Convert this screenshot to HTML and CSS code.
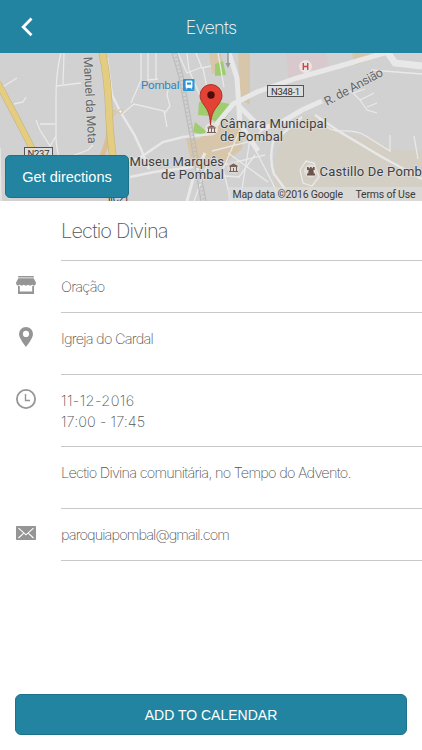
FILE: index.html
```html
<!DOCTYPE html>
<html lang="pt">
<head>
    <meta charset="UTF-8">
    <meta name="viewport" content="width=device-width, initial-scale=1.0">
    <title>Events</title>
    <link rel="stylesheet" href="styles.css">
</head>
<body>
    <div class="page">
        <header class="navbar">
            <a class="back" href="#" aria-label="Back">
                <svg width="13" height="20" viewBox="0 0 13 20"><path d="M11.500 1.600 3.200 10l8.300 8.300" fill="none" stroke="#fff" stroke-width="2.800"/></svg>
            </a>
            <h1>Events</h1>
        </header>

        <div class="map">
            <svg class="map-canvas" width="422" height="148" viewBox="0 0 422 148">
                <rect width="422" height="148" fill="#d1d1d1"/>

                <!-- areas -->
                <path d="M281 79 302 62l15 1 20 16 36 7 17 10 32 2v50H285q-12-9-12-22 0-25 8-35z" fill="#d3cfc5"/>
                <path d="M286 0h40l4 17-41 13z" fill="#d8c9cd"/>
                <path d="M209 0h12l3 18-12 3zM352 0h18v7l-15 5zM238 0h12v52l-10-6zM221 64l22 12-1 20-19 15-25 5-5-12 5-17zM186 85l18 1 3 17-16 5z" fill="#d7c6a9"/>
                <path d="M215 11l8-3 3 14-11 1zM214 48l16 3v8l-9 12-11-5zM199 49l9-2 1 16-11-1zM195 69l11 9-2 4-11-3z" fill="#a0cc70"/>

                <!-- small streets -->
                <g fill="none" stroke="#e9e9e9" stroke-width="1.300">
                    <path d="M61 0q-5 18-5 45v41q1 13 3 17M64 0l-1 31M56 33l25-3M1 35l16-10M14 51l9-2 3-5M36 67l4 10 10 16 6-10M40 71h15M93 92l-5 5-16 6M0 95l1 53M12 106l-2 40"/>
                    <path d="M141 0v27M148 0v27l10-1M156 0v26M141 27l-10 23M122 61l12-10 30 7 3 16M165 60l5-7-3-11 2-10"/>
                    <path d="M187 0 189 17l12 28M196 0l6 15 9-2M203 15l4 20M218 0l6 34M178 0l9 20 15-6"/>
                    <path d="M242 70 257 100l16 31 7 17M212 98l36-9 17-14M220 113l45-11M240 77l-17 39 8 32M250 86l-10 62M212 122l27 2 16-22M228 100l40 29M194 148l14-38"/>
                    <path d="M353 40l7 7 14-7M360 47l7 10 10 3M367 54l10-4M345 36l8 4 12-4"/>
                    <path d="M317 63q9 14 20 15 21-1 29 5l24 15v-16M300 117l6-9 8 2 5 14-7 9-9-3zM414 83l4 23M371 17l51 4"/>
                </g>
                <g fill="none" stroke="#e8e8e8" stroke-width="2.400">
                    <path d="M107 5 112 42l9 18 13 21 7 15 8 20M130 124l24-5 39-5M114 110l24-4 25-17 20-5 28-3"/>
                    <path d="M315 62 340 79l42 25 40 22M302 64l-29 25q-4 18 1 32l11 15"/>
                </g>

                <!-- main roads -->
                <g fill="none" stroke="#e8e8e8">
                    <path d="M229 0 237 25l3 46 18 27" stroke-width="5"/>
                    <path d="M211 78 233 51l24-12 40-14 43-12 51-15" stroke-width="5"/>
                    <path d="M239 53 261 75l16-3 25-15 20-9" stroke-width="5"/>
                    <path d="M388 0 395 10l27 3" stroke-width="7"/>
                    <path d="M205 100 193 126l-6 22" stroke-width="3"/>
                </g>

                <!-- railway -->
                <g fill="none" stroke="#bcbcbc">
                    <path d="M172 0 179 24l11 59 11 65M177 0l6 23 11 61 12 64" stroke-width="1.200"/>
                    <path d="M175 0 181 24l11 59 12 65" stroke-width="3" stroke-dasharray="1 3"/>
                </g>
                <path d="M228 0v13" stroke="#999" stroke-width="1.500"/>
                <path d="M225.500 10h5l-2.500 5z" fill="#999"/>

                <!-- highways -->
                <g fill="none">
                    <path d="M-2 30 16 64l18 35 10 17" stroke="#c4b382" stroke-width="6.600"/>
                    <path d="M-2 30 16 64l18 35 10 17" stroke="#e5cd80" stroke-width="5.400"/>
                    <path d="M109 75q0 12-7 28" stroke="#d9be96" stroke-width="5"/>
                    <path d="M102-2q6 27 7 62 1 25 6 60" stroke="#c4b382" stroke-width="7.600"/>
                    <path d="M102-2q6 27 7 62 1 25 6 60" stroke="#e5cd80" stroke-width="6.400"/>
                    <path d="M112 56l4 3-3 4" stroke="#dfc28f" stroke-width="1.500"/>
                </g>
                <circle cx="120.500" cy="58.500" r="2" fill="#eee" stroke="#d7b98d"/>

                <!-- road signs -->
                <g class="sign">
                    <rect x="24.500" y="94.500" width="28" height="11"/>
                    <text x="27.500" y="104" textLength="22">N237</text>
                    <text x="108" y="148.500" textLength="21">IIC21</text>
                    <rect x="267.500" y="32.500" width="36" height="11"/>
                    <text x="271" y="42" textLength="29">N348-1</text>
                </g>

                <!-- labels -->
                <g class="street">
                    <text transform="translate(83.500 4) rotate(87)" textLength="87">Manuel da Mota</text>
                    <text transform="translate(327 53) rotate(-28.500)" textLength="65">R. de Ansião</text>
                </g>
                <g class="label">
                    <text x="220" y="74.500" textLength="107">Câmara Municipal</text>
                    <text x="220" y="87.500" textLength="63">de Pombal</text>
                    <text x="129.500" y="112.500" textLength="94.500">Museu Marquês</text>
                    <text x="161" y="125.500" textLength="63">de Pombal</text>
                    <text x="319.500" y="123" textLength="113">Castillo De Pombal</text>
                </g>
                <text class="station" x="141" y="35.500" textLength="38.500">Pombal</text>

                <!-- station icon -->
                <rect x="183" y="26" width="11.500" height="12" rx="1" fill="#2795d6"/>
                <path d="M186 28h6v6.500h-6zM186 36.500l1.500-2M192 36.500l-1.500-2" fill="#fff" stroke="#fff" stroke-width=".8"/>
                <path d="M187 29.500h4v2.200h-4z" fill="#2795d6"/>

                <!-- hospital -->
                <circle cx="305.500" cy="13.500" r="6.500" fill="#e9e5e5"/>
                <path d="M303.300 10v7M307.700 10v7M303.300 13.500h4.400" stroke="#cf4646" stroke-width="1.400"/>

                <!-- museum and castle -->
                <circle cx="211.500" cy="76" r="6.500" fill="#e6e2dd"/>
                <circle cx="233.500" cy="114.500" r="6.500" fill="#dcd8d3"/>
                <g fill="none" stroke="#7a625a">
                    <path d="M207.500 75h8M207 79.500h9M208.500 75v4M211.500 75v4M214.500 75v4M229.500 113.500h8M229 118.500h9M230.500 114v4M233.500 115v3M236.500 114v4"/>
                    <path d="M207 74.500 211.500 72l4.500 2.500zM229 113l4.500-2.500L238 113z" fill="#7a625a" stroke="none"/>
                </g>
                <circle cx="310.500" cy="118" r="6.500" fill="#e2dfd9"/>
                <path d="M307 114h1.700v1.300h1.200V114h1.800v1.300h1.200V114h1.700v3h-1.200l.4 3.500h1.200v2h-8v-2h1.200l.4-3.500H307z" fill="#6b544c"/>

                <!-- pin -->
                <path d="M210.500 72c-.7-12-3-15-6.500-20-2.500-3.600-4-6-4-9.500a11 11 0 0 1 22 0c0 3.500-1.500 5.900-4 9.500-3.500 5-6.800 8-7.500 20z" fill="#e34235" stroke="#a52c27" stroke-width=".9"/>
                <circle cx="211" cy="42" r="3.700" fill="#4e0d0d"/>

                <!-- attribution -->
                <rect x="228" y="134" width="194" height="14" fill="#dfdfdf" opacity=".65"/>
                <g class="legal">
                    <text x="232.500" y="145" textLength="110.500">Map data ©2016 Google</text>
                    <text x="355.500" y="145" textLength="60">Terms of Use</text>
                </g>
            </svg>
            <button class="directions">Get directions</button>
        </div>

        <main class="details">
            <section class="row row-title">
                <div class="content"><h2>Lectio Divina</h2></div>
            </section>

            <section class="row">
                <div class="icon">
                    <svg width="20" height="20" viewBox="0 0 20 20" fill="#959595">
                        <path d="M2.200 1h15.600v1.500H2.200zM2.300 3.200h15.400L20 7.800c0 1.600-.8 2.700-1.900 2.700-.9 0-1.500-.5-1.900-1.100-.4.600-1.100 1.100-2 1.100s-1.700-.5-2.100-1.100c-.4.600-1.200 1.100-2.100 1.100s-1.700-.5-2.100-1.100c-.4.600-1.200 1.100-2.100 1.100s-1.600-.5-2-1.100c-.4.600-1 1.100-1.900 1.100C.8 10.500 0 9.400 0 7.800z"/>
                        <path d="M2 11h1.800v5.500h12.400V11H18v8H2z"/>
                    </svg>
                </div>
                <div class="content"><p>Oração</p></div>
            </section>

            <section class="row row-tall">
                <div class="icon">
                    <svg width="20" height="20" viewBox="0 0 20 20">
                        <path d="M10 0a7 7 0 0 0-7 7.100C3 11.700 10 20 10 20s7-8.300 7-12.900A7 7 0 0 0 10 0zm0 10a3.100 3.100 0 1 1 0-6.200 3.100 3.100 0 0 1 0 6.200z" fill="#959595"/>
                    </svg>
                </div>
                <div class="content"><p>Igreja do Cardal</p></div>
            </section>

            <section class="row row-date">
                <div class="icon">
                    <svg width="20" height="20" viewBox="0 0 20 20" fill="none" stroke="#959595">
                        <circle cx="10" cy="10" r="9.100" stroke-width="1.800"/>
                        <path d="M9.500 5v6.500h4.500" stroke-width="1.400"/>
                    </svg>
                </div>
                <div class="content">
                    <p class="date">11-12-2016</p>
                    <p class="time">17:00 - 17:45</p>
                </div>
            </section>

            <section class="row row-tall">
                <div class="content"><p class="description">Lectio Divina comunitária, no Tempo do Advento.</p></div>
            </section>

            <section class="row">
                <div class="icon">
                    <svg width="20" height="20" viewBox="0 0 20 20">
                        <rect y="3" width="20" height="14" rx=".8" fill="#959595"/>
                        <path d="M2.500 5.200 10 11.800l7.500-6.600M2.500 15l5-4.600M17.500 15l-5-4.600" fill="none" stroke="#fff" stroke-width="1.100"/>
                    </svg>
                </div>
                <div class="content"><p class="email">paroquiapombal@gmail.com</p></div>
            </section>
        </main>

        <footer>
            <button class="calendar">ADD TO CALENDAR</button>
        </footer>
    </div>
</body>
</html>
```

FILE: styles.css
```css
* {
    margin: 0;
    padding: 0;
    box-sizing: border-box;
}

body {
    background-color: #fff;
    color: #555;
    font-family: Inter, "Liberation Sans", sans-serif;
    font-weight: 200;
}

.page {
    display: flex;
    flex-direction: column;
    height: 750px;
    overflow: hidden;
}

.navbar {
    display: grid;
    grid-template-columns: 60px 1fr 60px;
    align-items: center;
    height: 53px;
    background-color: #2284a1;
    color: #fff;
}

.back {
    padding-left: 20px;
    line-height: 0;
}

.navbar h1 {
    padding-top: 2px;
    font-size: 18px;
    font-weight: 200;
    letter-spacing: -0.7px;
    text-align: center;
}

.map {
    position: relative;
    height: 148px;
    overflow: hidden;
}

.map-canvas {
    display: block;
}

.map-canvas text {
    font-family: Roboto, sans-serif;
    font-weight: 400;
}

.label text {
    font-size: 13px;
    fill: #404040;
    stroke: #dedede;
    stroke-width: 1.5px;
    paint-order: stroke;
}

.street text {
    font-size: 12.5px;
    fill: #666;
    stroke: #dadada;
    stroke-width: 1.5px;
    paint-order: stroke;
}

.station {
    font-size: 11.5px;
    fill: #2b87c0;
}

.sign rect {
    fill: #dedede;
    stroke: #555;
}

.sign text {
    font-size: 9.5px;
    fill: #333;
}

.legal text {
    font-size: 10.5px;
    fill: #3a3a3a;
}

button {
    border: 1px solid #1c718b;
    border-radius: 5px;
    background-color: #2284a1;
    color: #fff;
    font-family: "Liberation Sans", Arial, sans-serif;
    cursor: pointer;
}

.directions {
    position: absolute;
    left: 5px;
    bottom: 3px;
    width: 124px;
    height: 43px;
    font-size: 14.5px;
}

.details {
    flex: 1;
}

.row {
    display: grid;
    grid-template-columns: 61px 1fr;
    height: 52px;
}

.row-title {
    height: 60px;
}

.row-tall {
    height: 62px;
}

.row-date {
    height: 72px;
}

.icon {
    padding: 14px 0 0 16px;
    line-height: 0;
}

.content {
    grid-column: 2;
    padding-top: 15px;
    border-bottom: 1px solid #c9c9c9;
}

.content h2 {
    font-size: 20px;
    font-weight: 200;
    line-height: 30px;
    letter-spacing: -0.85px;
}

.content p {
    font-size: 14.5px;
    line-height: 21px;
    letter-spacing: -0.77px;
}

.content .date {
    letter-spacing: 0.4px;
}

.content .time {
    letter-spacing: 0.05px;
}

.content .email {
    letter-spacing: -0.92px;
}

footer {
    padding: 0 15px 15px;
}

.calendar {
    display: block;
    width: 100%;
    height: 41px;
    border-radius: 6px;
    font-size: 14px;
}
```
